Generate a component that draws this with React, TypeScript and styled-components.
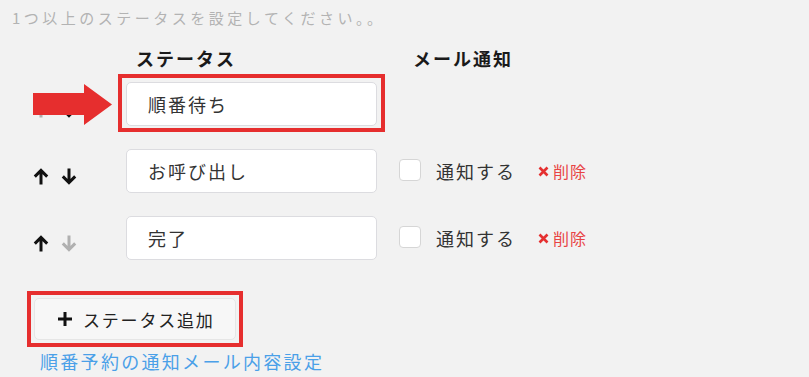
import React from "react";
import styled, { createGlobalStyle } from "styled-components";

const GlobalStyle = createGlobalStyle`
  html, body { margin: 0; padding: 0; background: #f2f2f2; }
  body { font-family: "Noto Sans CJK JP", "Noto Sans", sans-serif; }
  * { box-sizing: border-box; }
`;

const Page = styled.div`
  width: 809px;
  height: 377px;
  overflow: hidden;
  padding: 8px 0 0 12px;
`;

const Note = styled.p`
  margin: 0;
  font-size: 15px;
  line-height: 20px;
  letter-spacing: 3.5px;
  color: #b3b3b3;
`;

const Table = styled.div`
  margin: 18px 0 0 21px;
  display: flex;
  flex-direction: column;
`;

const cols = `93px 251px 22px auto`;

const HeaderRow = styled.div`
  display: grid;
  grid-template-columns: ${cols};
  height: 24px;
  margin-bottom: 12px;
`;

const HeaderCell = styled.div<{ $col: number; $pad: number }>`
  grid-column: ${(p) => p.$col};
  padding-left: ${(p) => p.$pad}px;
  font-size: 18px;
  line-height: 24px;
  font-weight: 700;
  letter-spacing: 2px;
  color: #1a1a1a;
`;

const Row = styled.div`
  position: relative;
  display: grid;
  grid-template-columns: ${cols};
  align-items: center;
  height: 44px;
  margin-bottom: 23px;
`;

const Arrows = styled.div`
  display: flex;
  gap: 12px;
  align-items: center;
  padding-top: 10px;
`;

const MoveIcon = styled.svg<{ $disabled?: boolean }>`
  width: 16px;
  height: 17px;
  color: ${(p) => (p.$disabled ? "#b0b0b0" : "#111")};
`;

const Highlight = styled.div<{ $on?: boolean }>`
  position: relative;
  width: 251px;
  height: 44px;
  &::after {
    content: "";
    display: ${(p) => (p.$on ? "block" : "none")};
    position: absolute;
    inset: -8px -8px -6px -8px;
    border: 4px solid #e62e2e;
    pointer-events: none;
  }
`;

const NameInput = styled.input`
  width: 251px;
  height: 44px;
  border: 1px solid #dcdce0;
  border-radius: 5px;
  background: #fff;
  padding: 0 0 0 21px;
  font-family: inherit;
  font-size: 18px;
  letter-spacing: 2px;
  color: #333;
  outline: none;
`;

const Notify = styled.div`
  grid-column: 4;
  display: flex;
  align-items: center;
`;

const CheckBox = styled.span`
  width: 22px;
  height: 22px;
  border: 1px solid #d6d6d6;
  border-radius: 4px;
  background: #fff;
  margin-top: -2px;
`;

const NotifyLabel = styled.span`
  margin-left: 15px;
  font-size: 18px;
  letter-spacing: 2px;
  color: #333;
`;

const DeleteLink = styled.span`
  margin-left: 22px;
  display: flex;
  align-items: center;
  gap: 4px;
  font-size: 16px;
  letter-spacing: 1px;
  color: #e84444;
`;

const CrossIcon = styled.svg`
  width: 11px;
  height: 11px;
`;

const Annotation = styled.svg`
  position: absolute;
  left: 0;
  top: 2px;
  width: 80px;
  height: 41px;
`;

const AddButton = styled.button`
  position: relative;
  margin: 15px 0 0 22px;
  width: 202px;
  height: 42px;
  border: 1px solid #e6e6e6;
  border-radius: 5px;
  background: #f7f7f7;
  display: flex;
  align-items: center;
  padding: 0 0 0 22px;
  gap: 10px;
  font-family: inherit;
  font-size: 17px;
  letter-spacing: 1.8px;
  color: #222;
  &::after {
    content: "";
    position: absolute;
    inset: -8px;
    border: 4px solid #e62e2e;
    pointer-events: none;
  }
`;

const PlusIcon = styled.svg`
  width: 16px;
  height: 16px;
`;

const SettingsLink = styled.a`
  display: block;
  margin: 11px 0 0 28px;
  font-size: 18px;
  line-height: 20px;
  letter-spacing: 2.3px;
  color: #4aa0e8;
  text-decoration: none;
`;

const UpArrow = ({ disabled }: { disabled?: boolean }) => (
  <MoveIcon $disabled={disabled} viewBox="0 0 16 17">
    <path d="M8 16.5V2.5M1.8 8.6L8 2.4L14.2 8.6" fill="none" stroke="currentColor" strokeWidth="3" />
  </MoveIcon>
);

const DownArrow = ({ disabled }: { disabled?: boolean }) => (
  <MoveIcon $disabled={disabled} viewBox="0 0 16 17">
    <path d="M8 0.5V14.5M1.8 8.4L8 14.6L14.2 8.4" fill="none" stroke="currentColor" strokeWidth="3" />
  </MoveIcon>
);

type Status = { name: string; upDisabled?: boolean; downDisabled?: boolean; notify: boolean; highlight?: boolean };

const statuses: Status[] = [
  { name: "順番待ち", upDisabled: true, notify: false, highlight: true },
  { name: "お呼び出し", notify: true },
  { name: "完了", downDisabled: true, notify: true },
];

export default function App() {
  return (
    <>
      <GlobalStyle />
      <Page>
        <Note>1つ以上のステータスを設定してください。。</Note>
        <Table>
          <HeaderRow>
            <HeaderCell $col={2} $pad={10}>ステータス</HeaderCell>
            <HeaderCell $col={4} $pad={14}>メール通知</HeaderCell>
          </HeaderRow>
          {statuses.map((s) => (
            <Row key={s.name}>
              <Arrows>
                <UpArrow disabled={s.upDisabled} />
                <DownArrow disabled={s.downDisabled} />
              </Arrows>
              <Highlight $on={s.highlight}>
                <NameInput defaultValue={s.name} />
              </Highlight>
              {s.notify && (
                <Notify>
                  <CheckBox />
                  <NotifyLabel>通知する</NotifyLabel>
                  <DeleteLink>
                    <CrossIcon viewBox="0 0 11 11">
                      <path d="M1.5 1.5L9.5 9.5M9.5 1.5L1.5 9.5" stroke="#e53030" strokeWidth="2.6" />
                    </CrossIcon>
                    削除
                  </DeleteLink>
                </Notify>
              )}
              {s.highlight && (
                <Annotation viewBox="0 0 80 41">
                  <polygon points="0,9 51,9 51,0 79,20.5 51,41 51,31 0,31" fill="#e62e2e" />
                </Annotation>
              )}
            </Row>
          ))}
        </Table>
        <AddButton>
          <PlusIcon viewBox="0 0 16 16">
            <path d="M8 1V15M1 8H15" stroke="#111" strokeWidth="3" />
          </PlusIcon>
          ステータス追加
        </AddButton>
        <SettingsLink href="#">順番予約の通知メール内容設定</SettingsLink>
      </Page>
    </>
  );
}
